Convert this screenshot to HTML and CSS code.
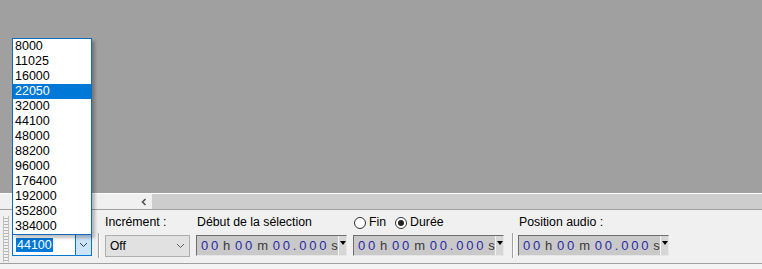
FILE: index.html
```html
<!DOCTYPE html>
<html lang="fr">
<head>
<meta charset="utf-8">
<title>Barre de sélection</title>
<link rel="stylesheet" href="styles.css">
</head>
<body>
<div class="app">
  <div class="canvas"></div>
  <div class="hline"></div>
  <div class="hscroll">
    <div class="track"></div>
    <div class="sbtn">
      <svg width="8" height="8" viewBox="0 0 8 8"><path d="M5.5 1 L2.5 4 L5.5 7" fill="none" stroke="#505050" stroke-width="1.6"/></svg>
    </div>
    <div class="thumb"></div>
  </div>
  <div class="toolbar">
    <div class="grip"></div>
    <div class="rate-combo">
      <span class="rate-value">44100</span>
      <span class="combo-btn active">
        <svg width="9" height="6" viewBox="0 0 9 6"><path d="M1 1 L4.5 4.5 L8 1" fill="none" stroke="#404040" stroke-width="1"/></svg>
      </span>
    </div>
    <div class="vsep"></div>
    <div class="group">
      <div class="label">Incrément :</div>
      <div class="combo">
        <span class="combo-text">Off</span>
        <span class="combo-btn">
          <svg width="9" height="6" viewBox="0 0 9 6"><path d="M1 1 L4.5 4.5 L8 1" fill="none" stroke="#606060" stroke-width="1"/></svg>
        </span>
      </div>
    </div>
    <div class="group">
      <div class="label">Début de la sélection</div>
      <div class="tfield">
        <span class="tf-text"><b>00</b><i>h</i><b>00</b><i>m</i><b>00.000</b><i class="s">s</i></span>
        <span class="tf-btn"></span>
      </div>
    </div>
    <div class="group">
      <div class="label radios">
        <span class="radio"></span><span class="rlabel">Fin</span>
        <span class="radio checked"></span><span class="rlabel">Durée</span>
      </div>
      <div class="tfield">
        <span class="tf-text"><b>00</b><i>h</i><b>00</b><i>m</i><b>00.000</b><i class="s">s</i></span>
        <span class="tf-btn"></span>
      </div>
    </div>
    <div class="vsep sep2"></div>
    <div class="group">
      <div class="label">Position audio :</div>
      <div class="tfield">
        <span class="tf-text"><b>00</b><i>h</i><b>00</b><i>m</i><b>00.000</b><i class="s">s</i></span>
        <span class="tf-btn"></span>
      </div>
    </div>
  </div>
  <div class="bottom"></div>

  <ul class="rate-list">
    <li>8000</li>
    <li>11025</li>
    <li>16000</li>
    <li class="sel">22050</li>
    <li>32000</li>
    <li>44100</li>
    <li>48000</li>
    <li>88200</li>
    <li>96000</li>
    <li>176400</li>
    <li>192000</li>
    <li>352800</li>
    <li>384000</li>
  </ul>
</div>
</body>
</html>
```

FILE: styles.css
```css
* { box-sizing: border-box; }
html, body {
  margin: 0;
  padding: 0;
  width: 762px;
  height: 269px;
  overflow: hidden;
  font-family: "Liberation Sans", Arial, sans-serif;
  font-size: 12px;
  color: #000;
  background: #f0f0f0;
}
.app {
  position: relative;
  display: flex;
  flex-direction: column;
  height: 269px;
}
.canvas {
  height: 193px;
  background: #a0a0a0;
}
.hline {
  height: 1px;
  background: #ffffff;
}
.hscroll {
  display: flex;
  height: 15px;
  background: #f0f0f0;
}
.track {
  width: 135px;
  background: #f0f0f0;
}
.sbtn {
  width: 17px;
  display: flex;
  align-items: center;
  justify-content: center;
  background: #f0f0f0;
}
.thumb {
  flex: 1;
  background: #cdcdcd;
}
.toolbar {
  display: flex;
  align-items: flex-start;
  height: 55px;
  border-top: 1px solid #a0a0a0;
  border-bottom: 1px solid #a0a0a0;
  background: #f0f0f0;
}
.bottom {
  flex: 1;
  background: #f4f4f4;
}
.grip {
  width: 6px;
  height: 46px;
  margin-left: 3px;
  margin-top: 6px;
  border-left: 1px solid #c0c0c0;
  border-right: 1px solid #c0c0c0;
  background: repeating-linear-gradient(to bottom, #f4f4f4 0 2px, #b4b4b4 2px 3px);
}
.rate-combo {
  display: flex;
  width: 80px;
  height: 22px;
  margin-left: 3px;
  margin-top: 24px;
  border: 1px solid #0078d7;
  background: #fff;
}
.rate-value {
  margin: 3px 0 0 3px;
  padding: 0 1px;
  height: 14px;
  line-height: 14px;
  background: #0078d7;
  color: #fff;
  font-size: 12.5px;
}
.combo-btn {
  margin-left: auto;
  width: 16px;
  display: flex;
  align-items: center;
  justify-content: center;
}
.combo-btn.active {
  background: #cce4f7;
  border-left: 1px solid #0078d7;
}
.vsep {
  width: 2px;
  height: 25px;
  margin-top: 23px;
  margin-left: 6px;
  border-left: 1px solid #a0a0a0;
  border-right: 1px solid #ffffff;
}
.sep2 {
  margin-left: 8px;
}
.group {
  display: flex;
  flex-direction: column;
  margin-left: 7px;
}
.vsep + .group {
  margin-left: 5px;
}
.label {
  height: 15px;
  line-height: 15px;
  margin-top: 5px;
  white-space: nowrap;
  color: #000;
  font-size: 12.3px;
}
.combo {
  display: flex;
  width: 85px;
  height: 22px;
  margin-top: 5px;
  border: 1px solid #adadad;
  background: #e1e1e1;
}
.combo .combo-btn {
  width: 18px;
}
.combo-text {
  padding-left: 4px;
  line-height: 20px;
}
.radios {
  display: flex;
  align-items: center;
}
.radio {
  width: 12px;
  height: 12px;
  border: 1px solid #333;
  border-radius: 50%;
  background: #fff;
  display: flex;
  align-items: center;
  justify-content: center;
}
.radio.checked::after {
  content: "";
  width: 6px;
  height: 6px;
  border-radius: 50%;
  background: #222;
}
.rlabel {
  margin-left: 3px;
}
.radios .rlabel:nth-child(2) { margin-right: 9px; }
.tfield {
  display: flex;
  width: 151px;
  height: 21px;
  margin-top: 5px;
  margin-left: -1px;
  border-top: 1px solid #6e6e6e;
  border-left: 1px solid #6e6e6e;
  border-bottom: 1px solid #e6e6e6;
  border-right: 1px solid #e6e6e6;
  background: #c9c9c9;
}
.tf-text {
  padding-left: 4px;
  line-height: 19px;
  font-size: 13px;
  letter-spacing: 2.8px;
  white-space: nowrap;
}
.tf-text b {
  font-weight: normal;
  color: #2a2aa8;
}
.tf-text i {
  font-style: normal;
  color: #3a3a3a;
  margin: 0 2px 0 2px;
}
.tf-text i.s { margin-right: 0; letter-spacing: 0; }
.tf-btn {
  margin-left: auto;
  width: 9px;
  height: 19px;
  border-left: 1px solid #f4f4f4;
  background: #d6d6d6;
  position: relative;
}
.tf-btn::after {
  content: "";
  position: absolute;
  left: 1px;
  top: 5px;
  border-left: 3.5px solid transparent;
  border-right: 3.5px solid transparent;
  border-top: 4px solid #000;
}
.rate-list {
  position: absolute;
  left: 12px;
  top: 38px;
  width: 80px;
  margin: 0;
  padding: 0;
  list-style: none;
  border: 1px solid #0f6cbd;
  background: #fff;
  box-shadow: 3px 3px 3px rgba(0,0,0,0.25);
}
.rate-list li {
  height: 15px;
  line-height: 15px;
  padding-left: 2px;
  font-size: 12.5px;
  color: #000;
}
.rate-list li.sel {
  background: #0078d7;
  color: #fff;
}
```
